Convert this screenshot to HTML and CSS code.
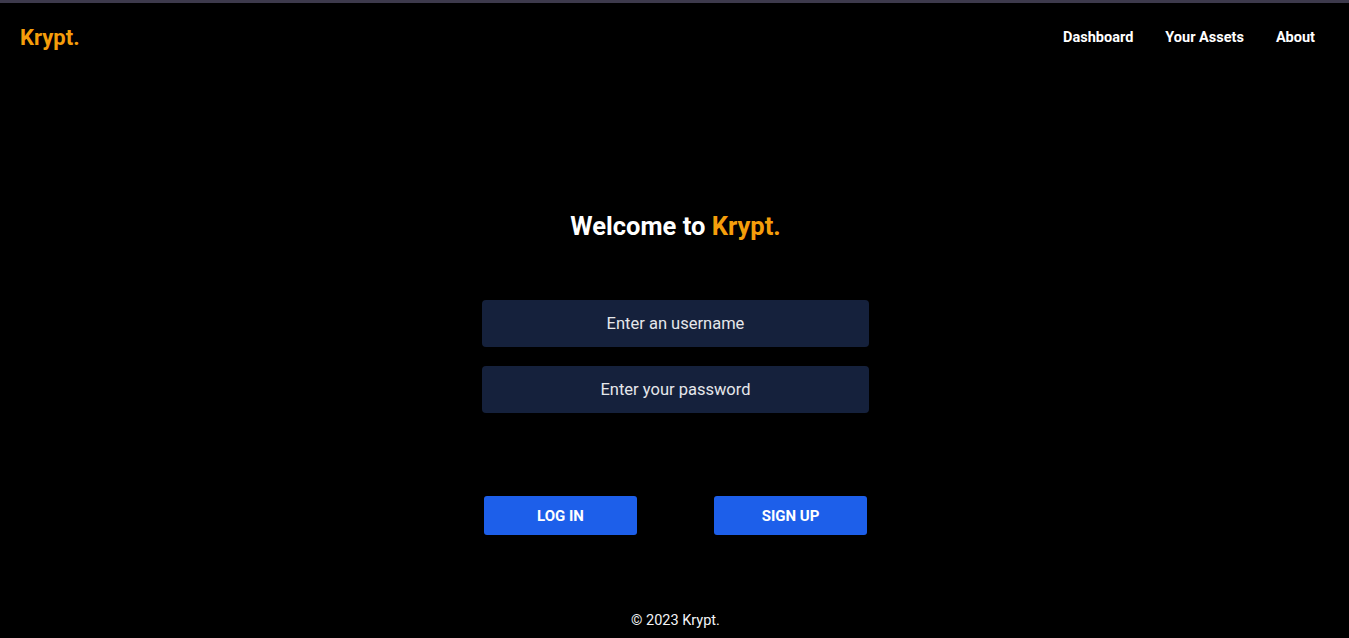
FILE: index.html
```html
<!DOCTYPE html>
<html lang="en">
<head>
<meta charset="utf-8">
<title>Krypt.</title>
<link rel="stylesheet" href="styles.css">
</head>
<body>
<div class="page">
  <header class="header">
    <div class="logo">Krypt.</div>
    <nav class="nav">
      <a href="#">Dashboard</a>
      <a href="#">Your Assets</a>
      <a href="#">About</a>
    </nav>
  </header>
  <main class="main">
    <h1 class="title">Welcome to <span class="accent">Krypt.</span></h1>
    <form class="form">
      <input class="field" type="text" placeholder="Enter an username">
      <input class="field" type="password" placeholder="Enter your password">
      <div class="actions">
        <button class="btn" type="button">LOG IN</button>
        <button class="btn" type="button">SIGN UP</button>
      </div>
    </form>
  </main>
  <footer class="footer">© 2023 Krypt.</footer>
</div>
</body>
</html>
```
FILE: styles.css
```css
* { box-sizing: border-box; }
html, body { margin: 0; padding: 0; background: #000; }
body {
  font-family: Roboto, "Liberation Sans", sans-serif;
  color: #fff;
}
.page {
  min-height: 638px;
  border-top: 3px solid #3d3a4c;
  display: flex;
  flex-direction: column;
}
.header {
  display: flex;
  justify-content: space-between;
  align-items: center;
  padding: 21px 34px 0 20px;
}
.logo {
  color: #f59e0b;
  font-weight: 700;
  font-size: 22px;
  line-height: 28px;
}
.nav {
  display: flex;
  gap: 32px;
}
.nav a {
  color: #fff;
  text-decoration: none;
  font-weight: 700;
  font-size: 14.5px;
  line-height: 28px;
}
.main {
  display: flex;
  flex-direction: column;
  align-items: center;
  padding-top: 158px;
  padding-left: 2px;
}
.title {
  margin: 0;
  font-size: 25.5px;
  line-height: 32px;
  font-weight: 700;
}
.accent { color: #f59e0b; }
.form {
  margin-top: 58px;
  display: flex;
  flex-direction: column;
  align-items: center;
  gap: 19px;
}
.field {
  width: 387px;
  height: 47px;
  border: 0;
  border-radius: 4px;
  background: #15213c;
  color: #e5e7eb;
  font-family: inherit;
  font-size: 16.5px;
  text-align: center;
  outline: none;
}
.field::placeholder { color: #e5e7eb; opacity: 1; }
.actions {
  margin-top: 64px;
  display: flex;
  gap: 77px;
}
.btn {
  width: 153px;
  height: 39px;
  border: 0;
  border-radius: 3px;
  background: #1d5fea;
  color: #fff;
  font-family: inherit;
  font-weight: 700;
  font-size: 15px;
  cursor: pointer;
}
.footer {
  margin-top: 77px;
  padding-left: 2px;
  text-align: center;
  font-size: 14.5px;
  line-height: 18px;
  color: #f3f4f6;
}
```
